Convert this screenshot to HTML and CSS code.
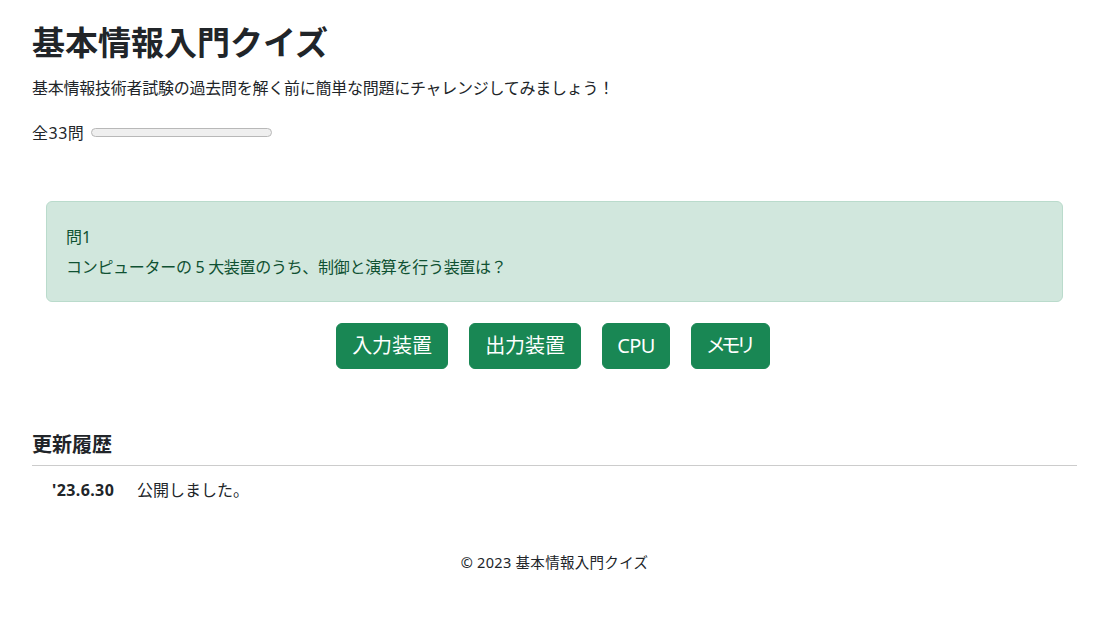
FILE: index.html
```html
<!DOCTYPE html>
<html lang="ja">
<head>
<meta charset="utf-8">
<title>基本情報入門クイズ</title>
<link rel="stylesheet" href="styles.css">
</head>
<body>
<main class="page">
  <h1 class="title">基本情報入門クイズ</h1>
  <p class="lead">基本情報技術者試験の過去問を解く前に簡単な問題にチャレンジしてみましょう！</p>
  <div class="count-row">
    <span>全33問</span>
    <div class="progress"></div>
  </div>

  <section class="question">
    <div class="q-num">問1</div>
    <div class="q-text">コンピューターの 5 大装置のうち、制御と演算を行う装置は？</div>
  </section>

  <div class="answers">
    <button class="btn">入力装置</button>
    <button class="btn">出力装置</button>
    <button class="btn btn-latin">CPU</button>
    <button class="btn btn-kana">メモリ</button>
  </div>

  <section class="history">
    <h2 class="history-title">更新履歴</h2>
    <dl class="history-list">
      <dt>'23.6.30</dt>
      <dd>公開しました。</dd>
    </dl>
  </section>

  <footer class="footer">© 2023 基本情報入門クイズ</footer>
</main>
</body>
</html>
```

FILE: styles.css
```css
* { box-sizing: border-box; }
html, body { margin: 0; padding: 0; background: #fff; }
body {
  font-family: "Noto Sans", "Noto Sans CJK JP", sans-serif;
  color: #212529;
  font-size: 16px;
  line-height: 24px;
}
.page {
  padding: 0 36px 0 32px;
  display: flex;
  flex-direction: column;
}
.title {
  margin: 23px 0 0;
  font-size: 33px;
  line-height: 40px;
  font-weight: 700;
}
.lead {
  margin: 13px 0 0;
  font-size: 16px;
  line-height: 24px;
  letter-spacing: -0.25px;
}
.count-row {
  margin-top: 21px;
  display: flex;
  align-items: center;
  gap: 7px;
  height: 24px;
}
.count-row span { letter-spacing: 0.5px; }
.progress {
  width: 181px;
  height: 9px;
  border: 1px solid #b8b8b8;
  background: #efefef;
  border-radius: 5px;
  margin-top: -2px;
}
.question {
  margin: 56px 14px 0;
  background: #d1e7dd;
  border: 1px solid #badbcc;
  color: #0f5132;
  border-radius: 6px;
  padding: 20px 19px;
  line-height: 30px;
  height: 101px;
}
.q-text { letter-spacing: -0.3px; }
.answers {
  margin-top: 21px;
  display: flex;
  justify-content: center;
  gap: 21px;
  padding-right: 3px;
}
.btn {
  font-family: "Noto Sans", "Noto Sans CJK JP", sans-serif;
  font-feature-settings: "palt";
  background: #198754;
  color: #fff;
  border: 1px solid #198754;
  border-radius: 6px;
  font-size: 20px;
  line-height: 30px;
  padding: 7px 15px;
  height: 46px;
}
.btn-latin { padding: 7px 14px; letter-spacing: -0.5px; }
.btn-kana { letter-spacing: -3px; padding: 7px 18px 7px 15px; }
.history { margin-top: 64px; }
.history-title {
  margin: 0;
  font-size: 20px;
  line-height: 24px;
  font-weight: 700;
  padding-bottom: 8px;
  border-bottom: 1px solid #cccccc;
}
.history-list {
  margin: 12px 0 0;
  display: grid;
  grid-template-columns: 85px 1fr;
  padding-left: 20px;
}
.history-list dt { font-weight: 700; letter-spacing: 0.4px; }
.history-list dd { margin: 0; }
.footer {
  margin-top: 50px;
  text-align: center;
  font-size: 14.5px;
  line-height: 21px;
  letter-spacing: 0.3px;
}
```
